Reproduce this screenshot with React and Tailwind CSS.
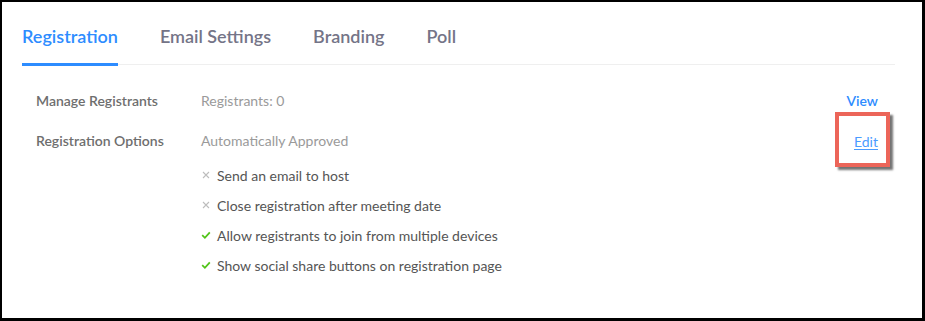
import React from 'react';

const options = [
  { on: false, label: 'Send an email to host' },
  { on: false, label: 'Close registration after meeting date' },
  { on: true, label: 'Allow registrants to join from multiple devices' },
  { on: true, label: 'Show social share buttons on registration page' },
];

function Mark({ on }) {
  if (on) {
    return (
      <svg width="10" height="10" viewBox="0 0 10 10" className="shrink-0">
        <path d="M1.2 5.2 L3.9 7.8 L8.8 2.4" fill="none" stroke="#52c41a" strokeWidth="1.8" />
      </svg>
    );
  }
  return (
    <svg width="10" height="10" viewBox="0 0 10 10" className="shrink-0">
      <path d="M2 2 L8 8 M8 2 L2 8" fill="none" stroke="#bdbdbd" strokeWidth="1.1" />
    </svg>
  );
}

export default function App() {
  return (
    <div
      className="w-[925px] h-[321px] bg-white border-black border-t-2 border-l-2 border-r-[3px] border-b-[3px] overflow-hidden"
      style={{ fontFamily: 'Lato, "Open Sans", sans-serif' }}
    >
      <div className="pl-5 pr-[27px] pt-[21px]">
        {/* tabs */}
        <div className="flex gap-[42px] border-b border-[#efefef] text-[18px] font-semibold">
          <div className="pb-[13px] text-[#2d8cff] border-b-[3px] border-[#2d8cff] -mb-[2px]">Registration</div>
          <div className="pb-[13px] text-[#747487]">Email Settings</div>
          <div className="pb-[13px] text-[#747487]">Branding</div>
          <div className="pb-[13px] text-[#747487]">Poll</div>
        </div>

        <div className="pl-[14px] pr-[17px] pt-[24px] text-[14px]">
          <div className="flex items-center h-[22px]">
            <div className="w-[165px] font-semibold text-[#6e6e6e]">Manage Registrants</div>
            <div className="flex-1 text-[#9a9a9a]">Registrants: 0</div>
            <div className="text-[#2d8cff] font-semibold">View</div>
          </div>

          <div className="flex mt-[19px]">
            <div className="w-[165px] font-semibold text-[#6e6e6e] leading-[22px]">Registration Options</div>
            <div className="flex-1">
              <div className="text-[#9a9a9a] leading-[22px]">Automatically Approved</div>
              <div className="flex flex-col gap-[8px] mt-[12px]">
                {options.map((o) => (
                  <div key={o.label} className="flex items-center gap-[6px] h-[22px] text-[#555]">
                    <Mark on={o.on} />
                    <span>{o.label}</span>
                  </div>
                ))}
              </div>
            </div>
            <div className="relative h-[22px] flex items-center">
              <a className="text-[#4a9bff] underline underline-offset-2 relative">Edit</a>
              <div className="absolute -left-[19px] -right-[12px] -top-[18px] -bottom-[15px] border-[4px] border-[#ec6559] shadow-[3px_3px_2px_rgba(0,0,0,0.55)]" />
            </div>
          </div>
        </div>
      </div>
    </div>
  );
}
